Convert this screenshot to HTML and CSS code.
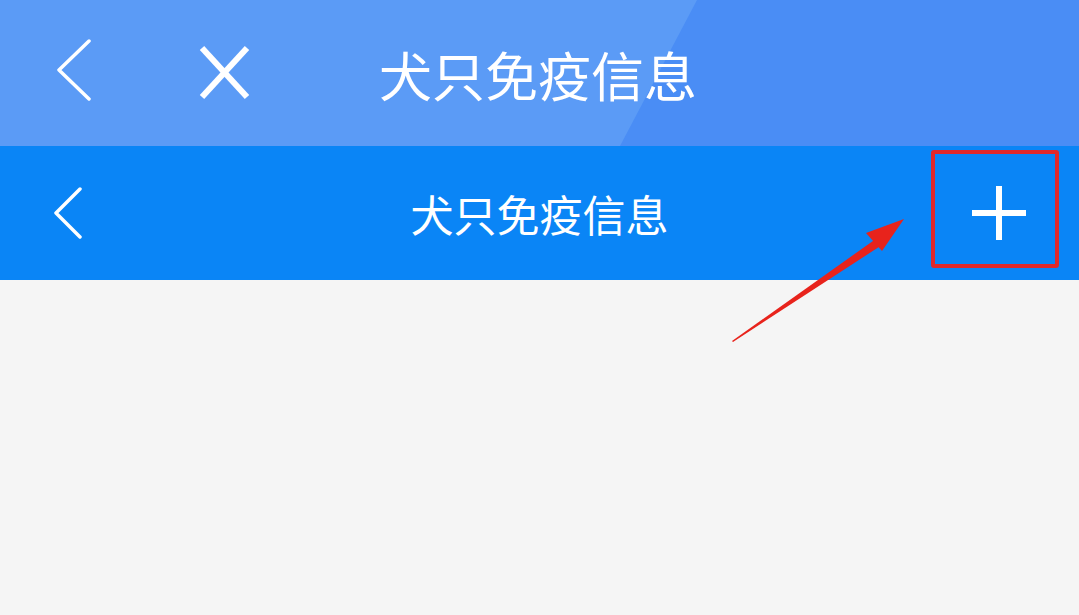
FILE: index.html
```html
<!DOCTYPE html>
<html lang="zh-CN">
<head>
    <meta charset="UTF-8">
    <meta name="viewport" content="width=device-width, initial-scale=1.0">
    <title>犬只免疫信息</title>
    <link rel="stylesheet" href="styles.css">
</head>
<body>
    <div class="app-bar">
        <svg class="app-back" width="36" height="62" viewBox="0 0 36 62">
            <polyline points="33,2 3,31 33,60" fill="none" stroke="#fff" stroke-width="3.5" stroke-linecap="round" stroke-linejoin="round"/>
        </svg>
        <svg class="app-close" width="53" height="55" viewBox="0 0 53 55">
            <line x1="4" y1="3" x2="49" y2="52" stroke="#fff" stroke-width="6"/>
            <line x1="49" y1="3" x2="4" y2="52" stroke="#fff" stroke-width="6"/>
        </svg>
        <div class="app-title">犬只免疫信息</div>
    </div>

    <div class="page-bar">
        <div class="page-left">
            <svg width="30" height="52" viewBox="0 0 30 52">
                <polyline points="27,2 3,26 27,50" fill="none" stroke="#fff" stroke-width="3.5" stroke-linecap="round" stroke-linejoin="round"/>
            </svg>
        </div>
        <div class="page-title">犬只免疫信息</div>
        <div class="page-right">
            <svg width="56" height="56" viewBox="0 0 56 56">
                <line x1="1" y1="28" x2="55" y2="28" stroke="#fff" stroke-width="6"/>
                <line x1="28" y1="1" x2="28" y2="55" stroke="#fff" stroke-width="6"/>
            </svg>
        </div>
        <div class="mark-box"></div>
    </div>

    <div class="content"></div>

    <svg class="mark-arrow" width="1079" height="615" viewBox="0 0 1079 615">
        <polygon points="732,341 880,236 885,243 733,342" fill="#e8231c"/>
        <polygon points="904,219 866,233 882,251" fill="#e8231c"/>
    </svg>
</body>
</html>
```

FILE: styles.css
```css
body {
    margin: 0;
    width: 1079px;
    height: 615px;
    overflow: hidden;
    background-color: #f5f5f5;
    font-family: "Noto Sans CJK SC", "Noto Sans", sans-serif;
    position: relative;
}
.app-bar {
    position: relative;
    height: 146px;
    display: flex;
    align-items: center;
    padding-left: 56px;
    background-color: #5b9bf6;
}
.app-bar::before {
    content: "";
    position: absolute;
    inset: 0;
    background-color: #4a8df5;
    clip-path: polygon(697px 0, 100% 0, 100% 100%, 620px 100%);
}
.app-back,
.app-close,
.app-title {
    position: relative;
}
.app-back {
    margin-top: -6px;
}
.app-close {
    margin-left: 106px;
    margin-top: -2px;
}
.app-title {
    margin-left: 128px;
    color: #fff;
    font-size: 53px;
    line-height: 1;
    margin-top: 2px;
}
.page-bar {
    position: relative;
    height: 134px;
    display: grid;
    grid-template-columns: 1fr auto 1fr;
    align-items: center;
    background-color: #0a85f6;
}
.page-left {
    padding-left: 53px;
    display: flex;
}
.page-title {
    color: #fff;
    font-size: 43px;
    line-height: 1;
}
.page-right {
    display: flex;
    justify-content: flex-end;
    padding-right: 52px;
}
.mark-box {
    position: absolute;
    left: 931px;
    top: 4px;
    width: 120px;
    height: 110px;
    border: 4px solid #e0282a;
    border-radius: 3px;
}
.content {
    height: 335px;
}
.mark-arrow {
    position: absolute;
    left: 0;
    top: 0;
}
```
